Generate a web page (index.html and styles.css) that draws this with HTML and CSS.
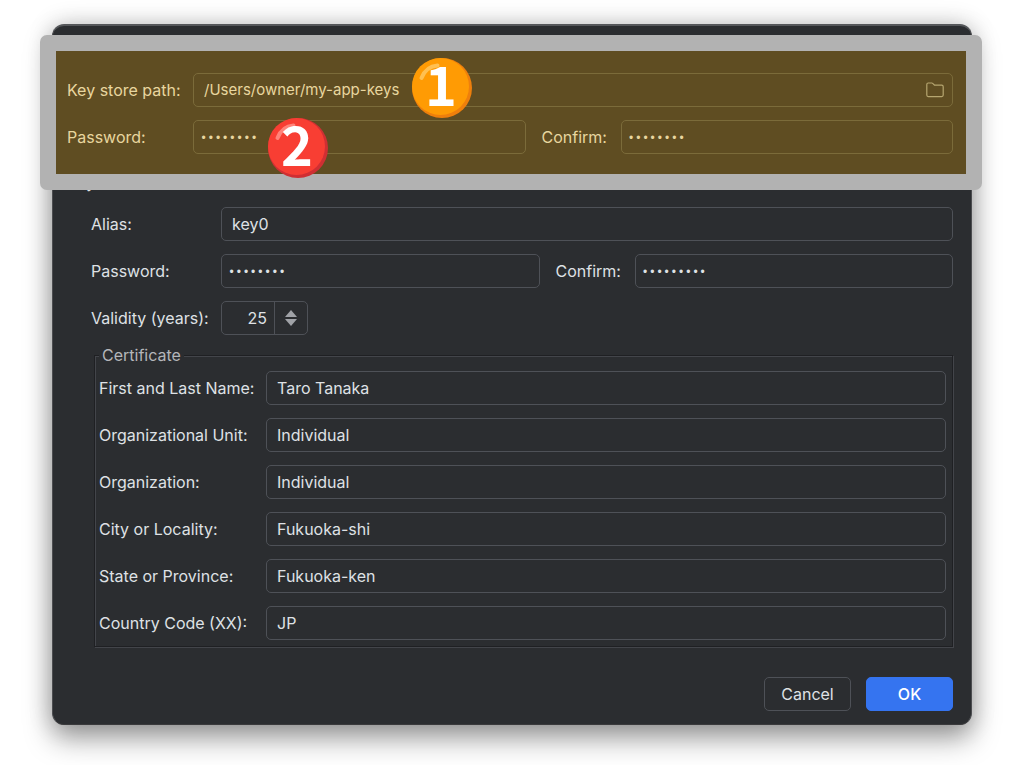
FILE: index.html
```html
<!DOCTYPE html>
<html lang="en">
<head>
<meta charset="utf-8">
<title>New Key Store</title>
<link rel="stylesheet" href="styles.css">
</head>
<body>
<form class="dialog">
  <section class="highlight">
    <div class="row">
      <label class="label" for="store-path">Key store path:</label>
      <div class="field path">
        <input class="path-input" id="store-path" type="text" value="/Users/owner/my-app-keys">
        <button class="browse" type="button" aria-label="Browse">
          <svg width="18" height="16" viewBox="0 0 18 16" fill="none" stroke="currentColor" stroke-width="1.2" stroke-linejoin="round"><path d="M.8 2.4Q.8 1 2.2 1H5.8Q6.3 1 6.7 1.4L8.6 3.2H15.7Q17.2 3.2 17.2 4.7V13.1Q17.2 14.6 15.7 14.6H2.2Q.8 14.6.8 13.1Z"/></svg>
        </button>
      </div>
    </div>
    <div class="row">
      <label class="label" for="store-pass">Password:</label>
      <input class="field secret" id="store-pass" type="password" value="password">
      <label class="confirm" for="store-pass2">Confirm:</label>
      <input class="field secret" id="store-pass2" type="password" value="password">
    </div>
    <svg class="badge badge-one" viewBox="0 0 60 60" role="img" aria-label="Step 1">
      <circle cx="30" cy="30" r="30" fill="#ee7f0c"/><circle cx="28.500" cy="28.500" r="28.500" fill="#ff9b04"/>
      <path d="M9.500 20Q14 8.500 25.500 7.500" fill="none" stroke="#ffc052" stroke-width="4" stroke-linecap="round"/>
      <text class="digit" x="29" y="48">1</text>
    </svg>
    <svg class="badge badge-two" viewBox="0 0 60 60" role="img" aria-label="Step 2">
      <circle cx="30" cy="30" r="30" fill="#cf2f33"/><circle cx="28.500" cy="28.500" r="28.500" fill="#f83e33"/>
      <path d="M9.500 20Q14 8.500 25.500 7.500" fill="none" stroke="#ff8379" stroke-width="4" stroke-linecap="round"/>
      <text class="digit" x="29" y="48">2</text>
    </svg>
  </section>

  <h2 class="section-title">Key</h2>
  <section class="key">
    <div class="row">
      <label class="label" for="alias">Alias:</label>
      <input class="field" id="alias" type="text" value="key0">
    </div>
    <div class="row">
      <label class="label" for="key-pass">Password:</label>
      <input class="field secret" id="key-pass" type="password" value="password">
      <label class="confirm" for="key-pass2">Confirm:</label>
      <input class="field secret" id="key-pass2" type="password" value="password1">
    </div>
    <div class="row">
      <label class="label" for="validity">Validity (years):</label>
      <div class="spinner">
        <input class="spinner-input" id="validity" type="text" inputmode="numeric" value="25">
        <div class="spinner-buttons">
          <button class="arrow" type="button" aria-label="Increase"><svg width="12" height="7" viewBox="0 0 12 7"><path d="M0 7 6 0l6 7z" fill="currentColor"/></svg></button>
          <button class="arrow" type="button" aria-label="Decrease"><svg width="12" height="7" viewBox="0 0 12 7"><path d="M0 0h12L6 7z" fill="currentColor"/></svg></button>
        </div>
      </div>
    </div>
  </section>

  <fieldset class="certificate">
    <legend class="legend">Certificate</legend>
    <div class="row"><label class="label" for="name">First and Last Name:</label><input class="field" id="name" type="text" value="Taro Tanaka"></div>
    <div class="row"><label class="label" for="unit">Organizational Unit:</label><input class="field" id="unit" type="text" value="Individual"></div>
    <div class="row"><label class="label" for="org">Organization:</label><input class="field" id="org" type="text" value="Individual"></div>
    <div class="row"><label class="label" for="city">City or Locality:</label><input class="field" id="city" type="text" value="Fukuoka-shi"></div>
    <div class="row"><label class="label" for="state">State or Province:</label><input class="field" id="state" type="text" value="Fukuoka-ken"></div>
    <div class="row"><label class="label" for="country">Country Code (XX):</label><input class="field" id="country" type="text" value="JP"></div>
  </fieldset>

  <footer class="actions">
    <button class="button" type="button">Cancel</button>
    <button class="button primary" type="button">OK</button>
  </footer>
</form>
</body>
</html>
```
FILE: styles.css
```css
* { box-sizing: border-box; }

body {
  margin: 0;
  padding: 24px 52px 40px;
  background: #fff;
  color: #dfe1e5;
  font: 16px/20px Inter, "Liberation Sans", sans-serif;
}

input, button { font: inherit; color: inherit; margin: 0; }

.dialog {
  background: #2b2d30;
  border: 1px solid #4c4d50;
  border-top: 2px solid #55575a;
  border-bottom: 1px solid #3a3a3c;
  border-radius: 12px;
  padding-bottom: 13px;
  box-shadow: 0 14px 28px rgba(0, 0, 0, .36), 0 0 24px rgba(0, 0, 0, .2);
}

.row { display: flex; align-items: center; }

.label { flex: none; white-space: nowrap; }

.confirm { flex: none; width: 95px; padding-left: 16px; }

.field {
  flex: 1 1 0;
  min-width: 0;
  height: 34px;
  padding: 0 10px;
  border: 1px solid #4e5157;
  border-radius: 5px;
  background: transparent;
}

.secret { padding: 4px 6px 0; font: 12px/20px "Liberation Mono", monospace; }

.highlight {
  position: relative;
  z-index: 1;
  display: grid;
  gap: 13px;
  margin: 9px -11px 0 -13px;
  padding: 22px 13px 20px 11px;
  border: 16px solid #b2b2b2;
  border-radius: 7px;
  background: #5f4d22;
  color: #e8d69f;
}

.highlight .label { width: 126px; }
.highlight .field { border-color: #7b6b3a; }

.path { display: flex; align-items: center; padding-right: 8px; }

.path-input {
  flex: 1;
  min-width: 0;
  padding: 0;
  border: 0;
  background: transparent;
  font-size: 15px;
}

.browse {
  display: flex;
  padding: 0;
  border: 0;
  background: transparent;
  color: #b6a670;
}

.badge { position: absolute; width: 60px; height: 60px; overflow: visible; }
.badge-one { left: 356px; top: 7px; }
.badge-two { left: 212px; top: 67px; }

.digit {
  font: bold 54px "Noto Sans CJK JP", sans-serif;
  text-anchor: middle;
  fill: #fff;
}

.section-title {
  margin: -18px 0 15px;
  padding-left: 14px;
  font: inherit;
}

.key {
  display: grid;
  gap: 13px;
  padding: 0 18px 0 38px;
}

.key .label { width: 130px; }

.spinner {
  display: flex;
  width: 87px;
  height: 34px;
  border: 1px solid #4e5157;
  border-radius: 5px;
}

.spinner-input {
  flex: 1;
  min-width: 0;
  padding: 0 7px;
  border: 0;
  background: transparent;
  text-align: right;
}

.spinner-buttons {
  display: flex;
  flex-direction: column;
  justify-content: center;
  align-items: center;
  gap: 2px;
  width: 33px;
  border-left: 1px solid #4e5157;
  color: #a0a2a7;
}

.arrow { display: flex; padding: 0; border: 0; background: transparent; }

.certificate {
  display: grid;
  gap: 13px;
  margin: 10px 18px 0 41px;
  padding: 6px 6px 6px 4px;
  border: 1px solid #1f2023;
  box-shadow: 1px 1px #43454a, inset 1px 1px #43454a;
}

.certificate .label { width: 167px; }

.legend { padding: 0 3px; background: #2b2d30; color: #b4b6ba; }

.actions {
  display: flex;
  justify-content: flex-end;
  gap: 15px;
  padding: 30px 18px 0;
}

.button {
  width: 87px;
  height: 34px;
  padding: 0;
  border: 1px solid #4e5157;
  border-radius: 5px;
  background: transparent;
}

.primary { border-color: #3574f0; background: #3574f0; color: #fff; font-weight: 500; }
```
